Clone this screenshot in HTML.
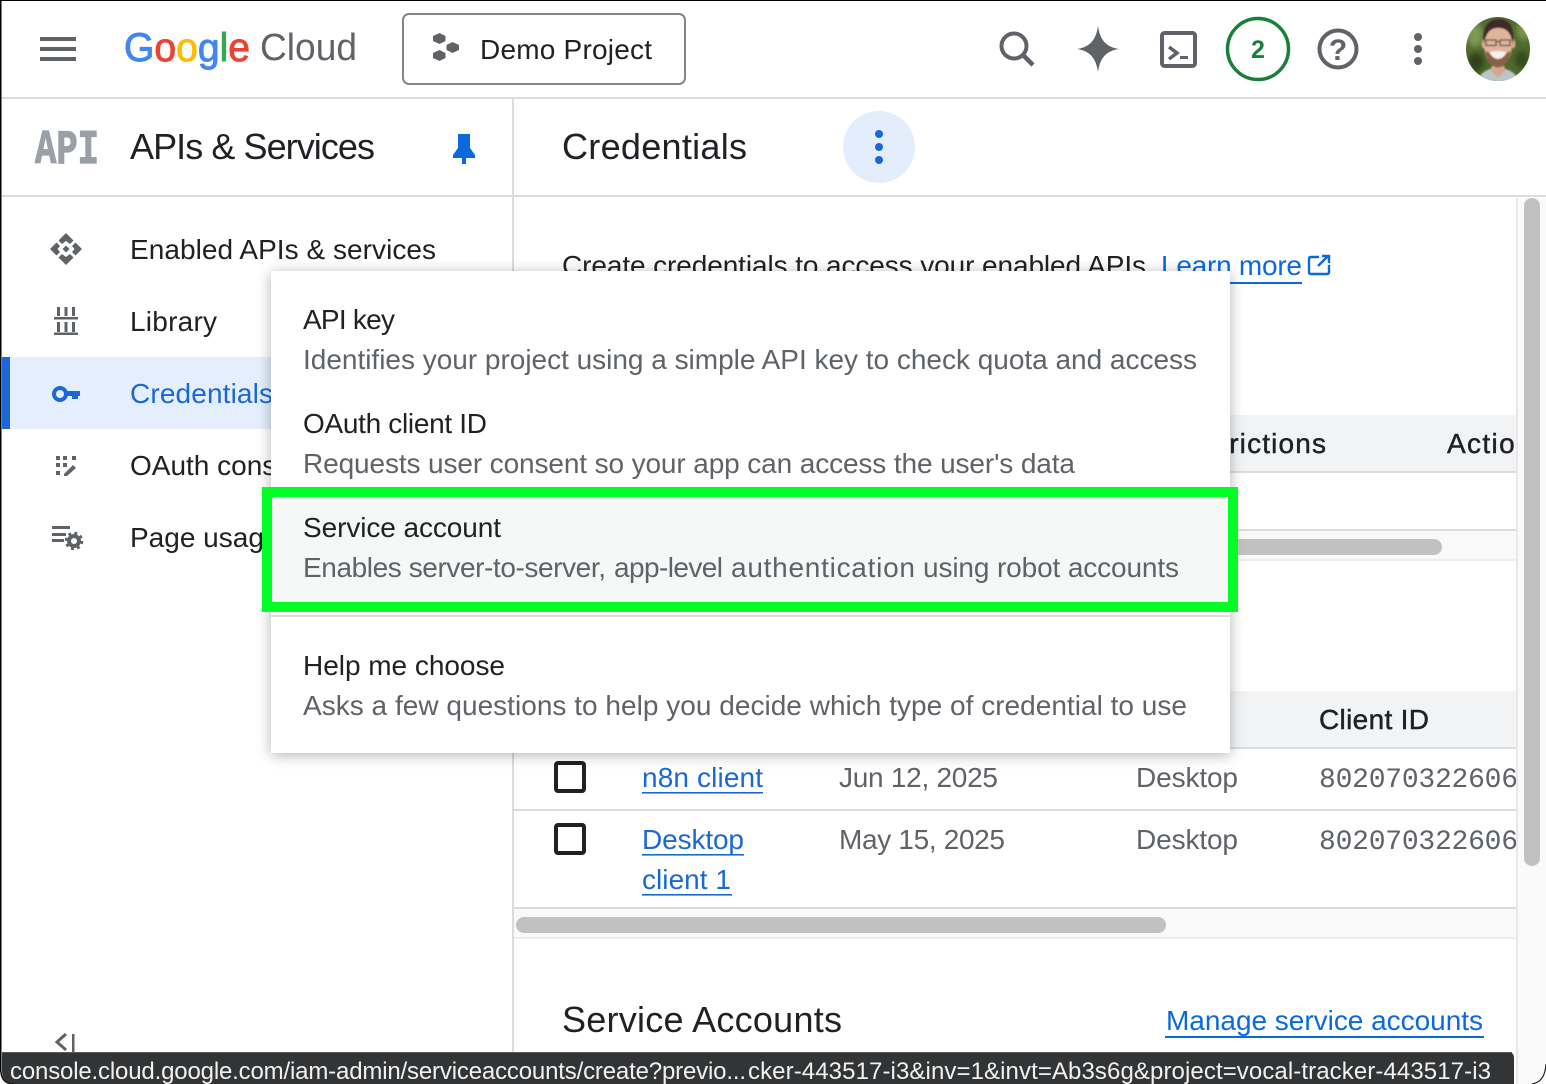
<!DOCTYPE html>
<html lang="en"><head><meta charset="utf-8"><title>Credentials</title>
<style>
html,body{margin:0;padding:0;width:1546px;height:1084px;overflow:hidden;background:#fff}
svg{display:block}
text{font-family:"Liberation Sans",sans-serif;font-size:28px;fill:#202124;white-space:pre}
.g{fill:#5f6368}.b{fill:#1a68d8}.h{font-size:36px}
.m{stroke:#202124;stroke-width:.45}
.mono{font-family:"Liberation Mono",monospace}
</style></head><body>
<svg width="1546" height="1084" viewBox="0 0 1546 1084" xmlns="http://www.w3.org/2000/svg">
<defs>
<filter id="sh" x="-5%" y="-10%" width="110%" height="120%"><feDropShadow dx="0" dy="2" stdDeviation="7" flood-color="#000" flood-opacity=".3"/></filter>
<filter id="bl" x="-10%" y="-10%" width="120%" height="120%"><feGaussianBlur stdDeviation=".9"/></filter>
<filter id="bl2" x="-20%" y="-20%" width="140%" height="140%"><feGaussianBlur stdDeviation="3"/></filter>
<clipPath id="av"><circle cx="1498" cy="49" r="32"/></clipPath>
<clipPath id="tb"><rect x="514" y="200" width="1002" height="860"/></clipPath>
</defs>
<rect width="1546" height="1084" fill="#fff"/>

<!-- right scrollbar -->
<rect x="1516" y="198" width="30" height="886" fill="#fafafa"/>
<rect x="1516" y="198" width="2" height="886" fill="#e8e8e8"/>
<rect x="1524" y="198" width="16" height="668" rx="8" fill="#c1c1c1"/>

<!-- structure lines -->
<rect x="2" y="97" width="1544" height="2" fill="#dadce0"/>
<rect x="2" y="195" width="1544" height="2" fill="#dadce0"/>
<rect x="512" y="98" width="2" height="960" fill="#dadce0"/>

<!-- top bar -->
<g fill="#5f6368"><rect x="40" y="37" width="36" height="4"/><rect x="40" y="47" width="36" height="4"/><rect x="40" y="57" width="36" height="4"/></g>
<text x="124" y="61" textLength="126" lengthAdjust="spacingAndGlyphs" style="font-size:40px"><tspan style="fill:#4285f4;stroke:#4285f4;stroke-width:.9">G</tspan><tspan style="fill:#ea4335;stroke:#ea4335;stroke-width:.9">o</tspan><tspan style="fill:#fbbc04;stroke:#fbbc04;stroke-width:.9">o</tspan><tspan style="fill:#4285f4;stroke:#4285f4;stroke-width:.9">g</tspan><tspan style="fill:#34a853;stroke:#34a853;stroke-width:.9">l</tspan><tspan style="fill:#ea4335;stroke:#ea4335;stroke-width:.9">e</tspan></text>
<text x="260" y="60" textLength="97" lengthAdjust="spacingAndGlyphs" class="g" style="font-size:38px">Cloud</text>
<rect x="403" y="14" width="282" height="70" rx="6" fill="#fff" stroke="#80868b" stroke-width="2"/>
<g fill="#5f6368"><polygon points="439.5,33 445.5,36 445.5,41 439.5,44 433,41 433,36"/><polygon points="439.5,50 445.5,53 445.5,58 439.5,61 433,58 433,53"/><polygon points="452.5,42 459,45 459,50 452.5,53 446.5,50 446.5,45"/></g>
<text x="480" y="59" textLength="172">Demo Project</text>

<circle cx="1014" cy="46" r="12.5" fill="none" stroke="#5f6368" stroke-width="4"/>
<path d="M1023 55L1033 65" stroke="#5f6368" stroke-width="4.5" fill="none"/>
<path d="M1098 26C1100 40 1106 47 1119 49C1106 51 1100 58 1098 72C1096 58 1090 51 1077 49C1090 47 1096 40 1098 26Z" fill="#5f6368"/>
<rect x="1162" y="33" width="33" height="33" rx="2.5" fill="none" stroke="#5f6368" stroke-width="4"/>
<path d="M1169 47L1177 53L1169 59" fill="none" stroke="#5f6368" stroke-width="3.5"/>
<rect x="1180" y="56" width="8" height="3" fill="#5f6368"/>
<circle cx="1258" cy="49" r="30.5" fill="none" stroke="#188038" stroke-width="3.5"/>
<text x="1258" y="58" text-anchor="middle" style="font-size:25px;font-weight:700;fill:#188038">2</text>
<circle cx="1338" cy="49" r="18.5" fill="none" stroke="#5f6368" stroke-width="4"/>
<text x="1338" y="60" text-anchor="middle" class="g" style="font-size:30px;font-weight:700">?</text>
<g fill="#5f6368"><circle cx="1418" cy="37" r="4"/><circle cx="1418" cy="49" r="4"/><circle cx="1418" cy="61" r="4"/></g>

<!-- avatar -->
<g clip-path="url(#av)">
<rect x="1466" y="17" width="64" height="64" fill="#4f6a30"/>
<g filter="url(#bl2)"><ellipse cx="1475" cy="35" rx="8" ry="12" fill="#7f9a55"/><ellipse cx="1524" cy="30" rx="7" ry="10" fill="#7d9650"/><ellipse cx="1476" cy="62" rx="8" ry="9" fill="#2f4018"/><ellipse cx="1522" cy="60" rx="7" ry="9" fill="#364a1e"/></g>
<g filter="url(#bl)">
<path d="M1476 84C1479 72 1489 68 1498 68C1507 68 1517 72 1520 84Z" fill="#b9c7cb"/>
<path d="M1490 70L1498 78L1506 70L1504 66H1492Z" fill="#d6a78e"/>
<ellipse cx="1483.5" cy="44" rx="2" ry="4.5" fill="#d9a58a"/><ellipse cx="1513.5" cy="44" rx="2" ry="4.5" fill="#d9a58a"/>
<ellipse cx="1498" cy="45" rx="14" ry="22" fill="#e2b49c"/>
<path d="M1484 44C1481 26 1490 19 1499 19C1509 19 1515 27 1513 44C1511 33 1507 28 1498 28C1490 28 1486 33 1484 44Z" fill="#3f2c26"/>
<path d="M1485 50C1486 62 1493 67.500 1498 67.500C1503 67.500 1510 62 1511 50C1509 54 1506 51 1498 51C1490 51 1487 54 1485 50Z" fill="#8b6049"/>
<path d="M1489 52Q1498 50 1507 52Q1503 59 1498 59Q1493 59 1489 52Z" fill="#f6f0ea"/>
<g fill="none" stroke="#55504c" stroke-width="1.300"><rect x="1486" y="40" width="10" height="5.500"/><rect x="1500" y="40" width="10" height="5.500"/><path d="M1496 41.500H1500"/></g>
</g></g>

<!-- subheader -->
<text x="35" y="163" textLength="64" lengthAdjust="spacingAndGlyphs" class="mono" style="font-size:48px;font-weight:700;fill:#9aa0a6;stroke:#9aa0a6;stroke-width:1.2">API</text>
<text x="130" y="159" textLength="245" class="h">APIs &amp; Services</text>
<path d="M458 134H470V148L475 155V158H466V164H462V158H453V155L458 148Z" fill="#0b69e0"/>
<text x="562" y="159" textLength="185" class="h">Credentials</text>
<circle cx="879" cy="147" r="36" fill="#e3edfc"/>
<g fill="#1a68d8"><circle cx="879" cy="134" r="4"/><circle cx="879" cy="147" r="4"/><circle cx="879" cy="160" r="4"/></g>

<!-- sidebar -->
<g fill="#5f6368">
<polygon points="66,233 73.500,240.500 70,244 66,241 62,244 58.500,240.500"/>
<polygon points="66,265 73.500,257.500 70,254 66,257 62,254 58.500,257.500"/>
<polygon points="50,249 56.500,242.500 60,246 57.500,249 60,252 56.500,255.500"/>
<polygon points="82,249 75.500,242.500 72,246 74.500,249 72,252 75.500,255.500"/>
<polygon points="66,245.500 69.500,249 66,252.500 62.500,249"/>
</g>
<text x="130" y="259" textLength="306">Enabled APIs &amp; services</text>
<g fill="#5f6368">
<rect x="57" y="307" width="3" height="9"/><rect x="64.500" y="307" width="3" height="9"/><rect x="72" y="307" width="3" height="9"/>
<rect x="54" y="317" width="24" height="2.500"/>
<rect x="57" y="322" width="3" height="10"/><rect x="64.500" y="322" width="3" height="10"/><rect x="72" y="322" width="3" height="10"/>
<rect x="54" y="332.500" width="24" height="2.500"/>
</g>
<text x="130" y="331" textLength="87">Library</text>
<rect x="2" y="357" width="272" height="72" fill="#e4eefc"/>
<rect x="2" y="357" width="8" height="72" fill="#1a68d8"/>
<circle cx="60" cy="394" r="6" fill="none" stroke="#1a68d8" stroke-width="4"/>
<path d="M65 391H80V396H78V399H72V396H65Z" fill="#1a68d8"/>
<text x="130" y="403" textLength="143" class="b">Credentials</text>
<g fill="#5f6368">
<rect x="56" y="456" width="4" height="4"/><rect x="63" y="456" width="4" height="4"/><rect x="72" y="456" width="4" height="4"/>
<rect x="56" y="463" width="4" height="4"/><rect x="63" y="463" width="4" height="4"/><rect x="56" y="471" width="4" height="4"/>
<path d="M64 474L73 465L76 468L67 476H64Z"/>
</g>
<text x="130" y="475">OAuth cons</text>
<g fill="#5f6368">
<rect x="52" y="526" width="18" height="3"/><rect x="52" y="533" width="14" height="3"/><rect x="52" y="539" width="12" height="3"/>
</g>
<circle cx="74" cy="541" r="5" fill="none" stroke="#5f6368" stroke-width="4"/>
<circle cx="74" cy="541" r="8" fill="none" stroke="#5f6368" stroke-width="2.500" stroke-dasharray="3 3.300"/>
<text x="130" y="547">Page usage</text>
<path d="M66 1034L57 1042L66 1050" fill="none" stroke="#5f6368" stroke-width="3"/>
<rect x="72" y="1034" width="2.500" height="18" fill="#5f6368"/>

<!-- main content -->
<text x="562" y="275" textLength="584">Create credentials to access your enabled APIs</text>
<text x="1161" y="275" textLength="141" class="b" style="fill:#0b69e0">Learn more</text>
<rect x="1161" y="282" width="141" height="2" fill="#0b69e0"/>
<path d="M1319 257H1311Q1309 257 1309 259V272Q1309 274 1311 274H1327Q1329 274 1329 272V265M1318 266L1328 256M1322 256H1329V263" fill="none" stroke="#0b69e0" stroke-width="2.400"/>

<g clip-path="url(#tb)">
<rect x="514" y="415" width="1004" height="56" fill="#f1f3f4"/>
<rect x="514" y="471" width="1004" height="2" fill="#dadce0"/>
<text x="1167" y="453" textLength="159" class="m">Restrictions</text>
<text x="1447" y="453" textLength="100" class="m">Actions</text>
<rect x="514" y="529" width="1004" height="2" fill="#dadce0"/>
<rect x="514" y="531" width="1004" height="28" fill="#f9f9f9"/>
<rect x="514" y="559" width="1004" height="2" fill="#eeeeee"/>
<rect x="1100" y="539" width="342" height="16" rx="8" fill="#c1c1c1"/>

<rect x="514" y="691" width="1004" height="56" fill="#f1f3f4"/>
<rect x="514" y="747" width="1004" height="2" fill="#dadce0"/>
<text x="1319" y="729" textLength="110" class="m">Client ID</text>
<rect x="556" y="763" width="28" height="28" rx="2" fill="none" stroke="#202124" stroke-width="4"/>
<text x="642" y="787" textLength="121" class="b">n8n client</text>
<rect x="642" y="792" width="121" height="1.600" fill="#1a68d8"/>
<text x="839" y="787" textLength="159" class="g">Jun 12, 2025</text>
<text x="1136" y="787" textLength="102" class="g">Desktop</text>
<text x="1319" y="787" textLength="199" class="g mono">802070322606</text>
<rect x="514" y="809" width="1004" height="2" fill="#dadce0"/>
<rect x="556" y="825" width="28" height="28" rx="2" fill="none" stroke="#202124" stroke-width="4"/>
<text x="642" y="849" textLength="102" class="b">Desktop</text>
<rect x="642" y="854" width="102" height="1.600" fill="#1a68d8"/>
<text x="642" y="889" textLength="89" class="b">client 1</text>
<rect x="642" y="894" width="90" height="1.600" fill="#1a68d8"/>
<text x="839" y="849" textLength="166" class="g">May 15, 2025</text>
<text x="1136" y="849" textLength="102" class="g">Desktop</text>
<text x="1319" y="849" textLength="199" class="g mono">802070322606</text>
<rect x="514" y="907" width="1004" height="2" fill="#dadce0"/>
<rect x="514" y="909" width="1004" height="28" fill="#f9f9f9"/>
<rect x="514" y="937" width="1004" height="2" fill="#eeeeee"/>
<rect x="516" y="917" width="650" height="16" rx="8" fill="#c1c1c1"/>
<text x="562" y="1032" textLength="280" class="h">Service Accounts</text>
<text x="1166" y="1030" textLength="317" style="fill:#0b69e0">Manage service accounts</text>
<rect x="1165" y="1036" width="319" height="2" fill="#0b69e0"/>
</g>

<!-- menu -->
<rect x="271" y="271" width="959" height="482" fill="#fff" filter="url(#sh)"/>
<text x="303" y="329" textLength="92">API key</text>
<text x="303" y="369" textLength="894" class="g">Identifies your project using a simple API key to check quota and access</text>
<text x="303" y="433" textLength="184">OAuth client ID</text>
<text x="303" y="473" textLength="772" class="g">Requests user consent so your app can access the user's data</text>
<rect x="272" y="497" width="956" height="105" fill="#f6f8f7"/>
<text x="303" y="537" textLength="198">Service account</text>
<text x="303" y="577" textLength="303" class="g">Enables server-to-server,</text>
<text x="614" y="577" textLength="109" class="g">app-level</text>
<text x="731" y="577" textLength="184" class="g">authentication</text>
<text x="923" y="577" textLength="256" class="g">using robot accounts</text>
<rect x="267" y="492" width="966" height="115" fill="none" stroke="#00ff26" stroke-width="10"/>
<rect x="271" y="615" width="959" height="2" fill="#dadce0"/>
<text x="303" y="675" textLength="202">Help me choose</text>
<text x="303" y="715" textLength="884" class="g">Asks a few questions to help you decide which type of credential to use</text>

<!-- status bar -->
<path d="M2 1052H1508Q1514 1052 1514 1058V1084H14Q3 1084 2 1072Z" fill="#333435"/>
<rect x="2" y="1052" width="1510" height="1" fill="#5a5a5a"/>
<text x="10" y="1079" textLength="736" style="font-size:24px;fill:#f1f1f1">console.cloud.google.com/iam-admin/serviceaccounts/create?previo...</text>
<text x="748" y="1079" textLength="743" style="font-size:24px;fill:#f1f1f1">cker-443517-i3&amp;inv=1&amp;invt=Ab3s6g&amp;project=vocal-tracker-443517-i3</text>

<!-- window edge -->
<rect x="0" y="0" width="1546" height="1" fill="#000"/>
<rect x="0" y="0" width="1.500" height="1072" fill="#000"/>
<path d="M1 1072Q2 1084 14 1084" fill="none" stroke="#111" stroke-width="1.500"/>
<path d="M0 1074Q1 1084 10 1084H0Z" fill="#fff"/>
<path d="M1546 1064Q1546 1084 1528 1084H1546Z" fill="#fff"/>
<path d="M1546 1064Q1545 1082 1532 1084" fill="none" stroke="#222" stroke-width="1.200"/>
</svg>
</body></html>
